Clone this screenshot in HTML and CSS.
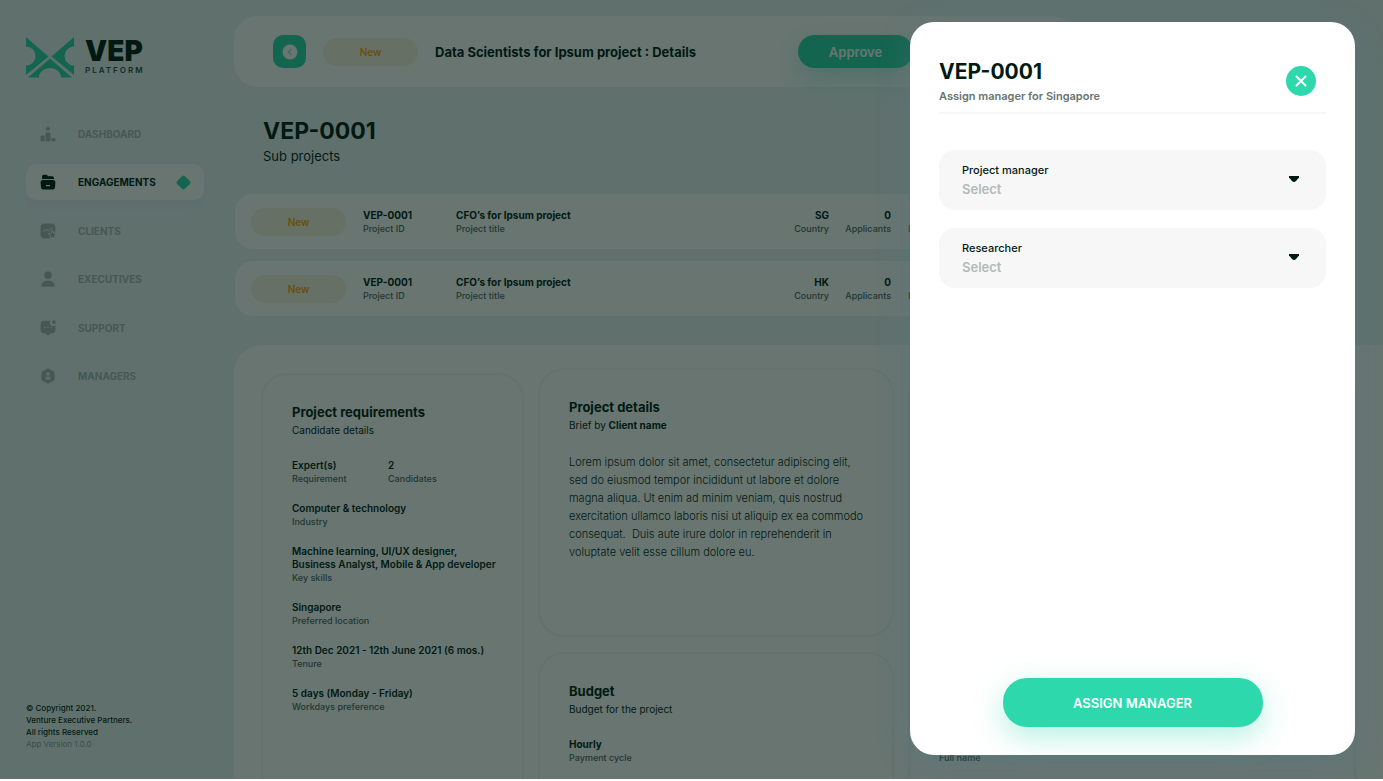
FILE: index.html
```html
<!DOCTYPE html>
<html lang="en">
<head>
<meta charset="utf-8">
<title>VEP Platform</title>
<link rel="stylesheet" href="styles.css">
</head>
<body>
<div class="shell">
  <aside class="sidebar">
    <div class="brand">
      <svg class="brand-mark" viewBox="0 0 48 41" aria-hidden="true">
        <path d="M0 0 22.500 19.500 0 38V28.500A9.500 9.500 0 0 0 0 9.500Z"/>
        <path d="M48 0 25.500 19.500 48 38V28.500A9.500 9.500 0 0 1 48 9.500Z"/>
        <path d="M24 21.500 46 40.500H35A11 9.500 0 0 0 13 40.500H2Z"/>
      </svg>
      <div class="brand-text"><span class="brand-name">VEP</span><span class="brand-sub">PLATFORM</span></div>
    </div>
    <nav class="nav">
      <a class="nav-item" href="#"><svg class="nav-icon" viewBox="0 0 16 16"><path d="M8 0 8.900 1.600 10.600 2 9.500 3.300 9.700 5 8 4.300 6.300 5 6.500 3.300 5.400 2 7.100 1.600Z"/><rect x="5.500" y="6.500" width="5" height="9" rx="1"/><rect x="0.500" y="9.500" width="4.200" height="6" rx="1"/><rect x="11.300" y="12" width="4.200" height="3.500" rx="1"/></svg>DASHBOARD</a>
      <a class="nav-item active" href="#"><svg class="nav-icon" viewBox="0 0 16 16"><path d="M2 5V2.500C2 1.400 2.700.700 3.700.700H6.500L8.300 2.300H12C13.300 2.300 14 3 14 4.200V5Z"/><path fill-rule="evenodd" d="M3 6H13C14.700 6 15.500 7 15.400 8.500L15 13.200C14.900 14.700 14 15.500 12.500 15.500H3.500C2 15.500 1.100 14.700 1 13.200L.600 8.500C.500 7 1.300 6 3 6ZM6 11V12.200H10V11Z"/></svg>ENGAGEMENTS<span class="nav-mark"></span></a>
      <a class="nav-item" href="#"><svg class="nav-icon" viewBox="0 0 16 16"><path d="M4.500.500H11.500C14 .500 15.500 2 15.500 4.500V8L14.200 9.500 12.500 6.700 10.900 9.700 7.700 10.300 9.900 12.700 9.400 15.500H4.500C2 15.500.500 14 .500 11.500V4.500C.500 2 2 .500 4.500.500Z"/><path class="line" d="M3.300 9 6 6.300 8.200 7.800 12.500 4.800"/><path d="M12.500 8.500 13.500 10.500 15.700 10.900 14.200 12.500 14.500 15 12.500 14 10.500 15 10.800 12.500 9.300 10.900 11.500 10.500Z"/></svg>CLIENTS</a>
      <a class="nav-item" href="#"><svg class="nav-icon" viewBox="0 0 16 16"><circle cx="8" cy="4.200" r="3.800"/><path d="M1.300 15.500C1.300 11.500 4 9.800 8 9.800S14.700 11.500 14.700 15.500Z"/></svg>EXECUTIVES</a>
      <a class="nav-item" href="#"><svg class="nav-icon" viewBox="0 0 16 16"><path d="M4 .700H10.500A3.300 3.300 0 0 0 15.500 5V9.500C15.500 12 14 13.300 12 13.300H10.500L8 15.800 5.500 13.300H4C2 13.300.500 12 .500 9.700V4.300C.500 2 2 .700 4 .700Z"/><circle cx="14" cy="2.200" r="1.900"/><g class="hole"><circle cx="4.800" cy="7.500" r=".8"/><circle cx="8" cy="7.500" r=".8"/><circle cx="11.200" cy="7.500" r=".8"/></g></svg>SUPPORT</a>
      <a class="nav-item" href="#"><svg class="nav-icon" viewBox="0 0 16 16"><path d="M8 .300 13.500 3.200Q14.600 3.800 14.600 5V11Q14.600 12.200 13.500 12.800L8 15.700 2.500 12.800Q1.400 12.200 1.400 11V5Q1.400 3.800 2.500 3.200Z"/><g class="hole"><circle cx="8" cy="6" r="1.700"/><path d="M5 11.500C5 9.500 6.200 8.600 8 8.600S11 9.500 11 11.500Z"/></g></svg>MANAGERS</a>
    </nav>
    <footer class="legal">
      <p>© Copyright 2021.<br>Venture Executive Partners.<br>All rights Reserved</p>
      <p class="version">App Version 1.0.0</p>
    </footer>
  </aside>

  <main class="main">
    <header class="topbar">
      <button class="back" type="button" aria-label="Back"><svg viewBox="0 0 16 16"><circle cx="8" cy="8" r="7.500"/><path d="M9 5.300 6.500 8 9 10.700"/></svg></button>
      <span class="pill">New</span>
      <h1 class="topbar-title">Data Scientists for Ipsum project : Details</h1>
      <button class="approve" type="button">Approve</button>
    </header>

    <section class="projects">
      <h2 class="project-code">VEP-0001</h2>
      <p class="project-sub">Sub projects</p>
      <div class="rows">
        <article class="row">
          <span class="pill">New</span>
          <div class="fact"><strong>VEP-0001</strong><span>Project ID</span></div>
          <div class="fact"><strong>CFO’s for Ipsum project</strong><span>Project title</span></div>
          <div class="fact right"><strong>SG</strong><span>Country</span></div>
          <div class="fact right"><strong>0</strong><span>Applicants</span></div>
          <div class="fact"><strong>&nbsp;</strong><span>Interviews</span></div>
        </article>
        <article class="row">
          <span class="pill">New</span>
          <div class="fact"><strong>VEP-0001</strong><span>Project ID</span></div>
          <div class="fact"><strong>CFO’s for Ipsum project</strong><span>Project title</span></div>
          <div class="fact right"><strong>HK</strong><span>Country</span></div>
          <div class="fact right"><strong>0</strong><span>Applicants</span></div>
          <div class="fact"><strong>&nbsp;</strong><span>Interviews</span></div>
        </article>
      </div>
    </section>

    <section class="details">
      <article class="box requirements">
        <h3>Project requirements</h3>
        <p class="box-sub">Candidate details</p>
        <div class="facts">
          <div class="pair">
            <div class="fact"><strong>Expert(s)</strong><span>Requirement</span></div>
            <div class="fact"><strong>2</strong><span>Candidates</span></div>
          </div>
          <div class="fact"><strong>Computer &amp; technology</strong><span>Industry</span></div>
          <div class="fact"><strong>Machine learning, UI/UX designer,<br>Business Analyst, Mobile &amp; App developer</strong><span>Key skills</span></div>
          <div class="fact"><strong>Singapore</strong><span>Preferred location</span></div>
          <div class="fact"><strong>12th Dec 2021 - 12th June 2021 (6 mos.)</strong><span>Tenure</span></div>
          <div class="fact"><strong>5 days (Monday - Friday)</strong><span>Workdays preference</span></div>
        </div>
      </article>
      <div class="stack">
        <article class="box brief">
          <h3>Project details</h3>
          <p class="box-sub">Brief by <b>Client name</b></p>
          <p class="copy">Lorem ipsum dolor sit amet, consectetur adipiscing elit,<br>sed do eiusmod tempor incididunt ut labore et dolore<br>magna aliqua. Ut enim ad minim veniam, quis nostrud<br>exercitation ullamco laboris nisi ut aliquip ex ea commodo<br>consequat.&nbsp; Duis aute irure dolor in reprehenderit in<br>voluptate velit esse cillum dolore eu.</p>
        </article>
        <article class="box budget">
          <h3>Budget</h3>
          <p class="box-sub">Budget for the project</p>
          <div class="facts"><div class="fact"><strong>Hourly</strong><span>Payment cycle</span></div></div>
        </article>
      </div>
      <article class="box contact">
        <div class="fact"><span>Full name</span></div>
      </article>
    </section>
  </main>

  <div class="overlay"></div>

  <form class="modal" role="dialog" aria-labelledby="modal-title">
    <header class="modal-head">
      <div>
        <h2 id="modal-title">VEP-0001</h2>
        <p>Assign manager for Singapore</p>
      </div>
      <button class="close" type="button" aria-label="Close"><svg viewBox="0 0 12 12"><path d="M1.500 1.500 10.500 10.500M10.500 1.500 1.500 10.500"/></svg></button>
    </header>
    <div class="field">
      <label for="pm">Project manager</label>
      <select id="pm"><option>Select</option></select>
      <svg class="caret" viewBox="0 0 10 6"><path d="M0 0H10V1.500L7 5Q5 7 3 5L0 1.500Z"/></svg>
    </div>
    <div class="field">
      <label for="researcher">Researcher</label>
      <select id="researcher"><option>Select</option></select>
      <svg class="caret" viewBox="0 0 10 6"><path d="M0 0H10V1.500L7 5Q5 7 3 5L0 1.500Z"/></svg>
    </div>
    <button class="assign" type="submit">ASSIGN MANAGER</button>
  </form>
</div>
</body>
</html>
```
FILE: styles.css
```css
:root {
  --ink: #001a13;
  --green: #2dd8ad;
  --mist: #ebf5f5;
}
* { box-sizing: border-box; }
body {
  margin: 0;
  background: #fff;
  color: var(--ink);
  font-family: Inter, "Liberation Sans", sans-serif;
}
h1, h2, h3, p { margin: 0; }
button, select { font-family: inherit; border: 0; padding: 0; }

.shell {
  position: relative;
  display: flex;
  height: calc(100vh - 2px);
  overflow: hidden;
  background: var(--mist);
}

/* Sidebar */
.sidebar {
  flex: 0 0 234px;
  display: flex;
  flex-direction: column;
  padding: 37px 30px 29px 26px;
}
.brand { display: flex; gap: 11px; height: 41px; margin-bottom: 38px; }
.brand-mark { width: 48px; height: 41px; fill: var(--green); }
.brand-text { display: flex; flex-direction: column; }
.brand-name { font-size: 28px; line-height: 28px; font-weight: 900; }
.brand-sub { font-size: 8px; line-height: 11px; font-weight: 600; letter-spacing: 2px; color: #2c4a43; }
.nav { display: flex; flex-direction: column; justify-content: space-between; min-height: 278px; }
.nav-item {
  display: flex;
  align-items: center;
  height: 36px;
  padding: 0 15px 0 14px;
  border-radius: 10px;
  font-size: 10px;
  font-weight: 700;
  color: #acb6b2;
  text-decoration: none;
}
.nav-icon { width: 16px; height: 16px; margin-right: 22px; fill: currentColor; }
.nav-icon .line { fill: none; stroke: var(--mist); stroke-width: 1; }
.nav-icon .hole { fill: var(--mist); }
.nav-item.active { background: #fff; color: var(--ink); box-shadow: 0 6px 12px rgba(215, 228, 245, 0.5); }
.nav-mark { width: 11px; height: 11px; margin-left: auto; border-radius: 2px; background: var(--green); transform: rotate(45deg); }
.legal { margin-top: auto; font-size: 8px; line-height: 12px; font-weight: 500; }
.version { font-weight: 400; color: #8a9d98; }

/* Main column */
.main { flex: 1; min-width: 0; display: flex; flex-direction: column; padding-top: 16px; }
.topbar {
  flex-shrink: 0;
  display: flex;
  align-items: center;
  height: 71px;
  margin-right: 308px;
  padding: 0 162px 0 39px;
  border-radius: 24px;
  background: #fff;
}
.back { display: grid; place-items: center; width: 33px; height: 33px; margin-right: 17px; border-radius: 10px; background: var(--green); }
.back svg { width: 16px; height: 16px; fill: #fff; }
.back path { fill: none; stroke: var(--green); stroke-width: 1; }
.pill {
  width: 95px;
  height: 28px;
  border-radius: 14px;
  background: #fcf3e2;
  color: #ffa200;
  font-size: 10px;
  line-height: 28px;
  font-weight: 600;
  text-align: center;
}
.topbar-title { margin-left: 17px; font-size: 13px; font-weight: 700; white-space: nowrap; }
.approve {
  width: 115px;
  height: 33px;
  margin-left: auto;
  border-radius: 17px;
  background: var(--green);
  color: #fff;
  font-size: 13px;
  font-weight: 600;
  box-shadow: 0 10px 24px rgba(45, 216, 173, 0.3);
}

.projects { flex-shrink: 0; padding: 30px 28px 0 1px; }
.project-code { padding-left: 28px; font-size: 23px; line-height: 29px; }
.project-sub { padding-left: 28px; font-size: 13px; line-height: 20px; font-weight: 400; }
.rows { display: grid; gap: 12px; margin-top: 28px; }
.row {
  display: grid;
  grid-template-columns: 95px 76px 290px 66px 45px 1fr;
  column-gap: 17px;
  align-items: center;
  height: 55px;
  padding: 0 16px;
  border-radius: 18px;
  background: #fff;
}
.fact { display: flex; flex-direction: column; white-space: nowrap; }
.fact strong { font-size: 10px; line-height: 13px; font-weight: 700; }
.fact span { font-size: 9px; line-height: 13px; font-weight: 500; color: #52655f; }
.fact.right { align-items: flex-end; }

.details {
  flex: 1 0 auto;
  display: grid;
  grid-template-columns: 263px 356px minmax(0, 1fr);
  gap: 14px;
  margin-top: 29px;
  padding: 23px 27px 0;
  border-radius: 28px 0 0 0;
  background: #fff;
}
.box { padding: 28px 29px; border: 2px solid #f2f8f7; border-radius: 26px; }
.box h3 { font-size: 13px; line-height: 18px; }
.box-sub { font-size: 10px; line-height: 18px; font-weight: 400; }
.requirements { height: 480px; margin-top: 5px; }
.requirements .fact strong { font-weight: 600; }
.facts { display: grid; gap: 17px; margin-top: 20px; }
.pair { display: grid; grid-template-columns: 80px 1fr; gap: 16px; }
.stack { display: grid; grid-template: 269px 200px / minmax(0, 1fr); gap: 15px; }
.copy { margin-top: 19px; font-size: 11px; line-height: 18px; font-weight: 300; white-space: nowrap; }
.contact { height: 480px; padding-top: 381px; }
.contact .fact span { font-weight: 600; }

/* Dialog */
.overlay { position: absolute; inset: 0; background: rgba(3, 25, 18, 0.6); }
.modal {
  position: absolute;
  top: 22px;
  right: 28px;
  bottom: 24px;
  width: 445px;
  display: flex;
  flex-direction: column;
  gap: 18px;
  padding: 37px 29px 28px;
  border-radius: 24px;
  background: #fff;
  box-shadow: 0 8px 30px rgba(80, 120, 135, 0.4);
}
.modal-head {
  display: flex;
  justify-content: space-between;
  height: 55px;
  margin-bottom: 18px;
  padding-right: 10px;
  border-bottom: 2px solid #f7f7f7;
}
.modal-head h2 { font-size: 21px; line-height: 26px; }
.modal-head p { font-size: 11px; line-height: 22px; font-weight: 600; color: #667570; }
.close { display: grid; place-items: center; width: 30px; height: 30px; margin-top: 7px; border-radius: 50%; background: var(--green); }
.close svg { width: 12px; height: 12px; fill: none; stroke: #fff; stroke-width: 2; stroke-linecap: round; }
.field {
  display: grid;
  grid-template: 20px 18px / 1fr 10px;
  align-content: center;
  align-items: center;
  height: 60px;
  padding: 0 27px 2px 23px;
  border-radius: 16px;
  background: #f7f7f7;
}
.field label { font-size: 11px; font-weight: 500; }
.field select { grid-row: 2; appearance: none; background: transparent; color: #b2bab7; font-size: 13px; font-weight: 600; }
.caret { grid-area: 1 / 2 / 3 / 3; width: 10px; height: 6px; fill: var(--ink); }
.assign {
  align-self: center;
  width: 260px;
  height: 49px;
  margin-top: auto;
  border-radius: 24px;
  background: var(--green);
  color: #fff;
  font-size: 13px;
  font-weight: 600;
  box-shadow: 0 10px 30px rgba(45, 216, 173, 0.35);
}
```
